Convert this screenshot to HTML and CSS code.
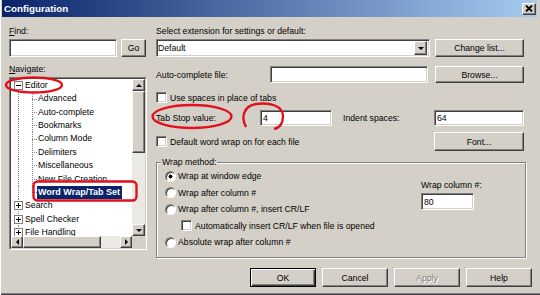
FILE: index.html
```html
<!DOCTYPE html>
<html lang="en">
<head>
    <meta charset="UTF-8">
    <title>Configuration</title>
    <link rel="stylesheet" href="styles.css">
</head>
<body>
<div class="window">
    <div class="titlebar">
        <span class="title">Configuration</span>
        <span class="close-btn">
            <svg width="8" height="7" viewBox="0 0 8 7"><path d="M1 0.5 L7 6.5 M7 0.5 L1 6.5" stroke="#000" stroke-width="1.8"/></svg>
        </span>
    </div>

    <div class="content">
        <!-- left: find + navigation tree -->
        <div class="left">
            <div class="label"><u>F</u>ind:</div>
            <div class="row">
                <div class="input find-input"></div>
                <div class="btn go-btn">Go</div>
            </div>
            <div class="label nav-label"><u>N</u>avigate:</div>
            <div class="tree">
                <div class="tree-in">
                    <div class="tree-main">
                        <div class="tree-items">
                            <div class="node root first"><span class="exp minus"></span>Editor</div>
                            <div class="node child">Advanced</div>
                            <div class="node child">Auto-complete</div>
                            <div class="node child">Bookmarks</div>
                            <div class="node child">Column Mode</div>
                            <div class="node child">Delimiters</div>
                            <div class="node child">Miscellaneous</div>
                            <div class="node child">New File Creation</div>
                            <div class="node child last"><span class="selected">Word Wrap/Tab Set</span></div>
                            <div class="node root"><span class="exp plus"></span>Search</div>
                            <div class="node root"><span class="exp plus"></span>Spell Checker</div>
                            <div class="node root"><span class="exp plus"></span>File Handling</div>
                        </div>
                        <div class="vscroll">
                            <div class="btn sb-btn"><span class="arr up"></span></div>
                            <div class="sb-thumb v"></div>
                            <div class="sb-track"></div>
                            <div class="btn sb-btn"><span class="arr down"></span></div>
                        </div>
                    </div>
                    <div class="hscroll">
                        <div class="btn sb-btn"><span class="arr lt"></span></div>
                        <div class="sb-thumb h"></div>
                        <div class="sb-track"></div>
                        <div class="btn sb-btn"><span class="arr rt"></span></div>
                        <div class="sb-corner"></div>
                    </div>
                </div>
            </div>
        </div>

        <!-- right: settings -->
        <div class="right">
            <div class="label">Select extension for settings or default:</div>
            <div class="row r1">
                <div class="input combo"><span>Default</span><span class="btn combo-arrow"><span class="arr down"></span></span></div>
                <div class="btn wide-btn">Change list...</div>
            </div>
            <div class="row r2">
                <span class="lbl auto-lbl">Auto-complete file:</span>
                <div class="input auto-input"></div>
                <div class="btn wide-btn browse">Browse...</div>
            </div>
            <div class="row r3">
                <span class="check"></span>Use spaces in place of tabs
            </div>
            <div class="row r4">
                <span class="lbl tab-lbl">Tab Stop value:</span>
                <div class="input tab-input">4</div>
                <span class="lbl indent-lbl">Indent spaces:</span>
                <div class="input indent-input">64</div>
            </div>
            <div class="row r5">
                <span class="check"></span>Default word wrap on for each file
                <div class="btn font-btn">Font...</div>
            </div>

            <div class="group">
                <span class="legend">Wrap method:</span>
                <div class="group-body">
                    <div class="opts">
                        <div class="opt"><span class="radio on"></span>Wrap at window edge</div>
                        <div class="opt"><span class="radio"></span>Wrap after column #</div>
                        <div class="opt"><span class="radio"></span>Wrap after column #, insert CR/LF</div>
                        <div class="opt sub"><span class="check"></span>Automatically insert CR/LF when file is opened</div>
                        <div class="opt"><span class="radio"></span>Absolute wrap after column #</div>
                    </div>
                    <div class="wrapcol">
                        <div class="label">Wrap column #:</div>
                        <div class="input wrap-input">80</div>
                    </div>
                </div>
            </div>
        </div>
    </div>

    <div class="buttons">
        <div class="btn dlg-btn default">OK</div>
        <div class="btn dlg-btn">Cancel</div>
        <div class="btn dlg-btn disabled">Apply</div>
        <div class="btn dlg-btn">Help</div>
    </div>

    <!-- red hand-drawn annotations over the screenshot -->
    <svg class="marks" width="540" height="295" viewBox="0 0 540 295">
        <g fill="none" stroke="#e2101c" stroke-width="2.4">
            <ellipse cx="34" cy="85" rx="28" ry="7.5"/>
            <rect x="33.5" y="181.5" width="103" height="19" rx="4"/>
            <ellipse cx="192" cy="116.5" rx="39.5" ry="11.5"/>
            <path d="M246 127 C241 118 243 106 256 104 C270 102 283 106 283 116 C283 124 279 128 274 129"/>
        </g>
    </svg>
</div>
</body>
</html>
```

FILE: styles.css
```css
body {
    margin: 0;
    background: #d4d0c8;
    font-family: "Liberation Sans", Arial, sans-serif;
    font-size: 8.7px;
    color: #000;
}
.window {
    position: relative;
    width: 540px;
    height: 295px;
    box-sizing: border-box;
    padding: 0 3px 0 2px;
    background: #d4d0c8;
    box-shadow: inset 1px 0 #fff, inset 0 -1px #404040, inset 0 -2px #808080;
    overflow: hidden;
}
.titlebar {
    height: 17px;
    display: flex;
    align-items: center;
    padding: 0 1px 0 2px;
    background: linear-gradient(to right, #0a246a, #a6caf0);
}
.title {
    color: #fff;
    font-weight: bold;
    font-size: 9.8px;
}
.close-btn {
    margin-left: auto;
    width: 14px;
    height: 12px;
    box-sizing: border-box;
    display: flex;
    align-items: center;
    justify-content: center;
    background: #d4d0c8;
    border: 1px solid;
    border-color: #fff #404040 #404040 #fff;
    box-shadow: inset -1px -1px #808080;
}
.content {
    display: flex;
    gap: 9px;
    padding: 9px 0 0 7px;
}
.label {
    height: 11px;
    line-height: 11px;
    white-space: nowrap;
}
.row {
    display: flex;
    align-items: center;
}

/* 3d widgets */
.input {
    background: #fff;
    border: 1px solid;
    border-color: #808080 #fff #fff #808080;
    box-shadow: inset 1px 1px #404040, inset -1px -1px #d4d0c8;
    box-sizing: border-box;
    display: flex;
    align-items: center;
    padding: 0 2px;
}
.btn {
    background: #d4d0c8;
    border: 1px solid;
    border-color: #fff #404040 #404040 #fff;
    box-shadow: inset -1px -1px #808080;
    box-sizing: border-box;
    display: flex;
    align-items: center;
    justify-content: center;
    white-space: nowrap;
}
.check {
    width: 11px;
    height: 11px;
    box-sizing: border-box;
    flex: none;
    background: #fff;
    border: 1px solid;
    border-color: #808080 #fff #fff #808080;
    box-shadow: inset 1px 1px #404040, inset -1px -1px #d4d0c8;
    margin-right: 3px;
}
.radio {
    width: 11px;
    height: 11px;
    box-sizing: border-box;
    flex: none;
    border-radius: 50%;
    background: #fff;
    border: 1px solid;
    border-color: #808080 #fff #fff #808080;
    box-shadow: inset 1px 1px #404040;
    margin-right: 2px;
}
.radio.on {
    background: radial-gradient(circle at 50% 50%, #000 0 1.8px, #fff 2.2px);
}
.arr {
    width: 0;
    height: 0;
    border: 3px solid transparent;
}
.arr.up { border-bottom-color: #000; border-top-width: 0; }
.arr.down { border-top-color: #000; border-bottom-width: 0; }
.arr.lt { border-right-color: #000; border-left-width: 0; }
.arr.rt { border-left-color: #000; border-right-width: 0; }

/* left column */
.left {
    width: 138px;
    flex: none;
}
.left .row {
    margin-top: 2px;
    height: 18px;
}
.find-input {
    width: 108px;
    height: 18px;
}
.go-btn {
    width: 25px;
    height: 18px;
    margin-left: 4px;
}
.nav-label {
    margin-top: 7px;
}
.tree {
    margin-top: 2px;
    width: 138px;
    height: 173px;
    box-sizing: border-box;
    border: 1px solid;
    border-color: #808080 #fff #fff #808080;
}
.tree-in {
    height: 100%;
    box-sizing: border-box;
    border: 1px solid;
    border-color: #404040 #d4d0c8 #d4d0c8 #404040;
    background: #fff;
    display: flex;
    flex-direction: column;
}
.tree-main {
    flex: 1;
    display: flex;
    overflow: hidden;
}
.tree-items {
    flex: 1;
    overflow: hidden;
}
.node {
    height: 13.36px;
    line-height: 13.36px;
    white-space: nowrap;
    display: flex;
    align-items: center;
    background: repeating-linear-gradient(#808080 0 1px, transparent 1px 2px) 7px 0 / 1px 100% no-repeat;
}
.node.root {
    padding-left: 3px;
}
.node.first {
    background-position: 7px 50%;
    background-size: 1px 50%;
}
.node.child {
    padding-left: 27px;
    background:
        repeating-linear-gradient(#808080 0 1px, transparent 1px 2px) 7px 0 / 1px 100% no-repeat,
        repeating-linear-gradient(#808080 0 1px, transparent 1px 2px) 21px 0 / 1px 100% no-repeat,
        repeating-linear-gradient(to right, #808080 0 1px, transparent 1px 2px) 21px 50% / 5px 1px no-repeat;
}
.node.child.last {
    padding-left: 26px;
    background:
        repeating-linear-gradient(#808080 0 1px, transparent 1px 2px) 7px 0 / 1px 100% no-repeat,
        repeating-linear-gradient(#808080 0 1px, transparent 1px 2px) 21px 0 / 1px 50% no-repeat,
        repeating-linear-gradient(to right, #808080 0 1px, transparent 1px 2px) 21px 50% / 5px 1px no-repeat;
}
.exp {
    width: 9px;
    height: 9px;
    box-sizing: border-box;
    border: 1px solid #808080;
    margin-right: 2px;
    flex: none;
    background: linear-gradient(#000, #000) 50% 50% / 5px 1px no-repeat, #fff;
}
.exp.plus {
    background:
        linear-gradient(#000, #000) 50% 50% / 5px 1px no-repeat,
        linear-gradient(#000, #000) 50% 50% / 1px 5px no-repeat, #fff;
}
.selected {
    background: #0a246a;
    color: #fff;
    font-weight: bold;
    font-size: 9px;
    padding: 0 2px 0 1px;
    line-height: 13px;
}
.vscroll {
    width: 13px;
    flex: none;
    display: flex;
    flex-direction: column;
}
.sb-btn {
    width: 13px;
    height: 12px;
    flex: none;
}
.sb-track {
    flex: 1;
    background: #ebe9e4;
}
.sb-thumb {
    background: #d4d0c8;
    border: 1px solid;
    border-color: #fff #404040 #404040 #fff;
    box-shadow: inset -1px -1px #808080;
    box-sizing: border-box;
    flex: none;
}
.sb-thumb.v {
    height: 62px;
}
.hscroll {
    height: 12px;
    display: flex;
    flex: none;
}
.hscroll .sb-btn {
    width: 12px;
}
.sb-thumb.h {
    width: 78px;
}
.sb-corner {
    width: 13px;
    background: #d4d0c8;
}

/* right column */
.right {
    width: 370px;
    flex: none;
}
.right .row {
    padding-right: 2px;
    white-space: nowrap;
}
.r1 {
    margin-top: 2px;
    height: 18px;
}
.combo {
    width: 274px;
    height: 18px;
    padding: 2px 2px 2px 1px;
}
.combo-arrow {
    margin-left: auto;
    width: 13px;
    height: 14px;
}
.wide-btn {
    width: 89px;
    height: 18px;
    margin-left: auto;
}
.r2 {
    margin-top: 9px;
    height: 17px;
}
.auto-lbl {
    width: 114px;
}
.auto-input {
    width: 158px;
    height: 17px;
}
.browse {
    height: 17px;
}
.r3 {
    margin-top: 9px;
    height: 11px;
}
.r4 {
    margin-top: 7px;
    height: 16px;
}
.tab-lbl {
    width: 104px;
}
.tab-input {
    width: 72px;
    height: 16px;
}
.indent-lbl {
    width: 91px;
    margin-left: 11px;
}
.indent-input {
    width: 90px;
    height: 16px;
}
.r5 {
    margin-top: 6px;
    height: 19px;
}
.font-btn {
    width: 90px;
    height: 19px;
    margin-left: auto;
}
.group {
    margin-top: 11px;
    height: 96px;
    box-sizing: border-box;
    border: 1px solid #808080;
    box-shadow: inset 1px 1px #fff, 1px 1px #fff;
}
.legend {
    display: block;
    width: fit-content;
    margin: -6px 0 0 4px;
    padding: 0 1px;
    height: 11px;
    line-height: 11px;
    background: #d4d0c8;
}
.group-body {
    display: grid;
    grid-template-columns: 264px 1fr;
}
.opts {
    padding-left: 8px;
}
.opt {
    height: 16.5px;
    display: flex;
    align-items: center;
    white-space: nowrap;
}
.opt.sub {
    padding-left: 16px;
}
.wrapcol .label {
    margin-top: 11.5px;
}
.wrap-input {
    margin-top: 2.5px;
    width: 53px;
    height: 17px;
}

/* dialog buttons */
.buttons {
    display: flex;
    justify-content: flex-end;
    gap: 6px;
    margin-top: 10px;
    padding-right: 5px;
}
.dlg-btn {
    width: 66px;
    height: 19px;
}
.dlg-btn.default {
    border-color: #000;
    box-shadow: inset 1px 1px #fff, inset -1px -1px #404040, inset -2px -2px #808080;
}
.dlg-btn.disabled {
    color: #808080;
    text-shadow: 1px 1px #fff;
}
.marks {
    position: absolute;
    left: 0;
    top: 0;
    pointer-events: none;
}
```
